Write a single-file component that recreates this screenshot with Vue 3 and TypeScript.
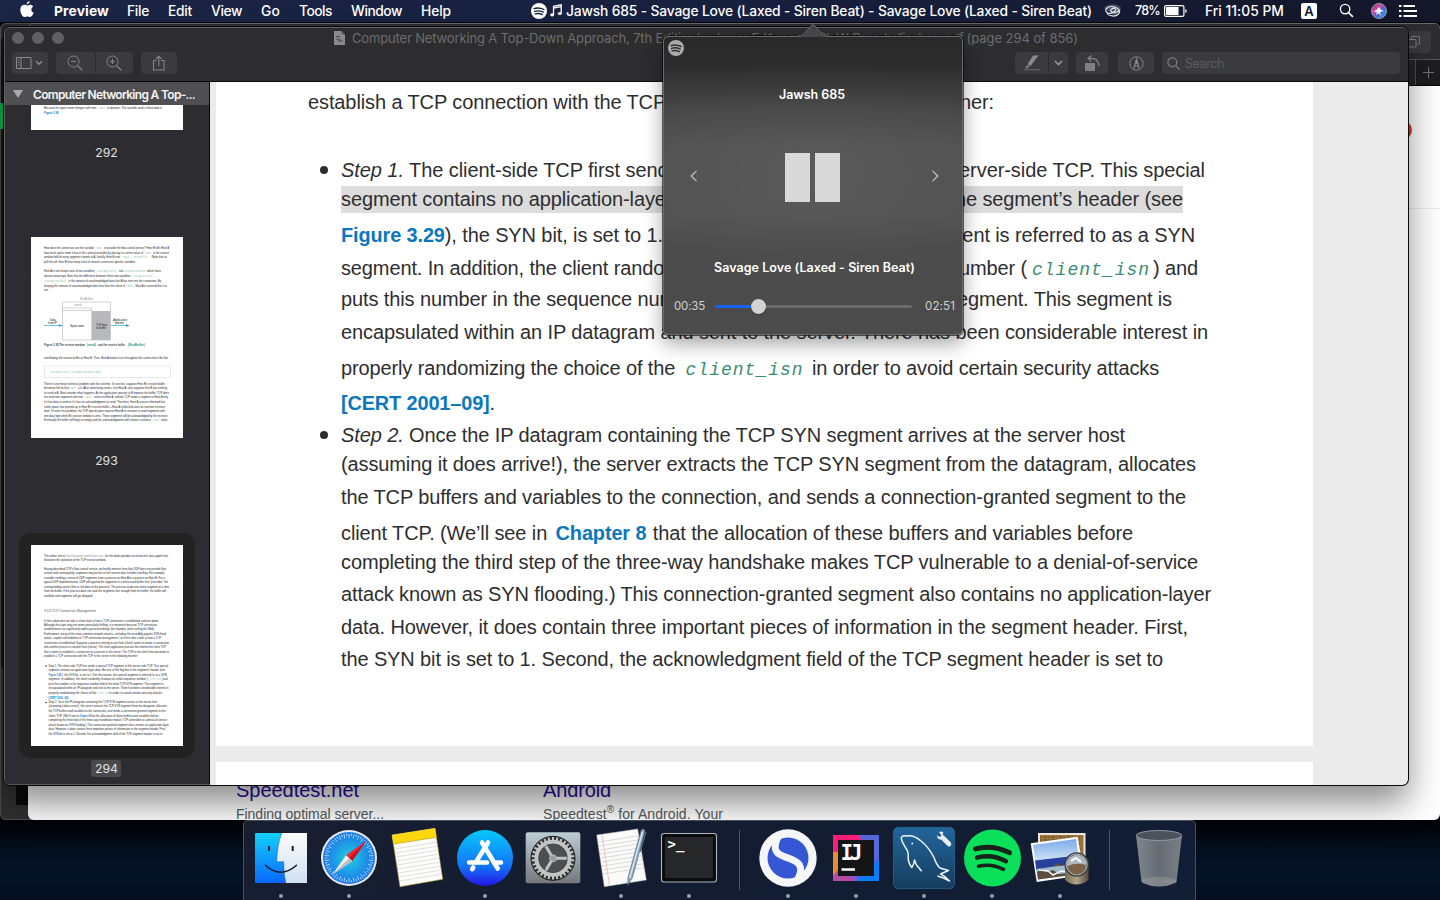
<script setup lang="ts">
import type { Directive } from 'vue'

/* Tracks a run of text out or in so that it fills the given width. */
const vFit: Directive<HTMLElement, number> = {
  mounted(el, binding) {
    const count = (el.textContent ?? '').length
    if (count === 0) return
    let spacing = 0
    for (let pass = 0; pass < 4; pass++) {
      spacing += (binding.value - el.getBoundingClientRect().width) / count
      el.style.letterSpacing = `${spacing}px`
    }
  },
}

interface Run { t: string; k?: 'i' | 'link' | 'code' }
interface Line { w: number; gap: number; runs: Run[]; bullet?: boolean; mark?: boolean }
interface Tiny { y: number; w: number; t: string; x?: number; k?: string }

const menus = [
  { t: 'File', w: 22 }, { t: 'Edit', w: 24 }, { t: 'View', w: 31 }, { t: 'Go', w: 19 },
  { t: 'Tools', w: 33 }, { t: 'Window', w: 51 }, { t: 'Help', w: 30 },
]

const lines: Line[] = [
  { w: 864, gap: 44, bullet: true, runs: [{ t: 'Step 1.', k: 'i' }, { t: ' The client-side TCP first sends a special TCP segment to the server-side TCP. This special' }] },
  { w: 842, gap: 5, mark: true, runs: [{ t: 'segment contains no application-layer data. But one of the flag bits in the segment’s header (see' }] },
  { w: 854, gap: 12, runs: [{ t: 'Figure 3.29', k: 'link' }, { t: '), the SYN bit, is set to 1. For this reason, this special segment is referred to as a SYN' }] },
  { w: 857, gap: 9, runs: [{ t: 'segment. In addition, the client randomly chooses an initial sequence number (' }, { t: 'client_isn', k: 'code' }, { t: ') and' }] },
  { w: 831, gap: 7, runs: [{ t: 'puts this number in the sequence number field of the initial TCP SYN segment. This segment is' }] },
  { w: 867, gap: 9, runs: [{ t: 'encapsulated within an IP datagram and sent to the server. There has been considerable interest in' }] },
  { w: 818, gap: 12, runs: [{ t: 'properly randomizing the choice of the ' }, { t: 'client_isn', k: 'code' }, { t: ' in order to avoid certain security attacks' }] },
  { w: 154, gap: 11, runs: [{ t: '[CERT 2001–09]', k: 'link' }, { t: '.' }] },
  { w: 784, gap: 8, bullet: true, runs: [{ t: 'Step 2.', k: 'i' }, { t: ' Once the IP datagram containing the TCP SYN segment arrives at the server host' }] },
  { w: 855, gap: 5, runs: [{ t: '(assuming it does arrive!), the server extracts the TCP SYN segment from the datagram, allocates' }] },
  { w: 845, gap: 9, runs: [{ t: 'the TCP buffers and variables to the connection, and sends a connection-granted segment to the' }] },
  { w: 792, gap: 12, runs: [{ t: 'client TCP. (We’ll see in ' }, { t: 'Chapter 8', k: 'link' }, { t: ' that the allocation of these buffers and variables before' }] },
  { w: 857, gap: 5, runs: [{ t: 'completing the third step of the three-way handshake makes TCP vulnerable to a denial-of-service' }] },
  { w: 870, gap: 8, runs: [{ t: 'attack known as SYN flooding.) This connection-granted segment also contains no application-layer' }] },
  { w: 847, gap: 9, runs: [{ t: 'data. However, it does contain three important pieces of information in the segment header. First,' }] },
  { w: 822, gap: 8, runs: [{ t: 'the SYN bit is set to 1. Second, the acknowledgment field of the TCP segment header is set to' }] },
]

const page292: Tiny[] = [
  { y: 3, w: 53, t: 'Because the spare room changes with time,' },
  { y: 3, x: 68, w: 6, t: 'rwnd', k: 'code' },
  { y: 3, x: 76, w: 55, t: 'is dynamic. The variable rwnd is illustrated in' },
  { y: 8, w: 15, t: 'Figure 3.38.', k: 'link' },
]

const page293: Tiny[] = [
  { y: 12, w: 50, t: 'How does the connection use the variable' }, { y: 12, x: 65, w: 6, t: 'rwnd', k: 'code' }, { y: 12, x: 73, w: 65, t: 'to provide the flow-control service? Host B tells Host A' },
  { y: 16.7, w: 99, t: 'how much spare room it has in the connection buffer by placing its current value of' }, { y: 16.7, x: 114, w: 6, t: 'rwnd', k: 'code' }, { y: 16.7, x: 122, w: 16, t: 'in the receive' },
  { y: 21.3, w: 76, t: 'window field of every segment it sends to A. Initially, Host B sets' }, { y: 21.3, x: 92, w: 25, t: 'rwnd = RcvBuffer', k: 'code' }, { y: 21.3, x: 119, w: 17, t: '. Note that to' },
  { y: 26, w: 92, t: 'pull this off, Host B must keep track of several connection-specific variables.' },
  { y: 35.3, w: 51, t: 'Host A in turn keeps track of two variables,' }, { y: 35.3, x: 66, w: 20, t: 'LastByteSent', k: 'code' }, { y: 35.3, x: 88, w: 4, t: 'and' }, { y: 35.3, x: 93, w: 22, t: 'LastByteAcked', k: 'code' }, { y: 35.3, x: 116, w: 14, t: 'which have' },
  { y: 40, w: 87, t: 'obvious meanings. Note that the difference between these two variables,' }, { y: 40, x: 102, w: 23, t: 'LastByteSent –', k: 'code' },
  { y: 45, w: 22, t: 'LastByteAcked', k: 'code' }, { y: 45, x: 36, w: 94, t: ', is the amount of unacknowledged data that A has sent into the connection. By' },
  { y: 49.7, w: 81, t: 'keeping the amount of unacknowledged data less than the value of' }, { y: 49.7, x: 95, w: 7, t: 'rwnd', k: 'code' }, { y: 49.7, x: 103, w: 33, t: ', Host A is assured that it is' },
  { y: 54.3, w: 4, t: 'not' },
  { y: 109.3, w: 41, t: 'Figure 3.38 The receive window', k: 'b' }, { y: 109.3, x: 56, w: 9, t: '(rwnd)', k: 'bcode' }, { y: 109.3, x: 67, w: 27, t: 'and the receive buffer', k: 'b' }, { y: 109.3, x: 97, w: 17, t: '(RcvBuffer)', k: 'bcode' },
  { y: 122, w: 124, t: 'overflowing the receive buffer at Host B. Thus, Host A makes sure throughout the connection’s life that' },
  { y: 135.6, x: 19, w: 51, t: 'LastByteSent–LastByteAcked≤rwnd', k: 'code' },
  { y: 147.5, w: 121, t: 'There is one minor technical problem with this scheme. To see this, suppose Host B’s receive buffer' },
  { y: 152.2, w: 25, t: 'becomes full so that' }, { y: 152.2, x: 39, w: 6, t: 'rwnd', k: 'code' }, { y: 152.2, x: 47, w: 89, t: '= 0. After advertising rwnd = 0 to Host A, also suppose that B has nothing' },
  { y: 156.7, w: 125, t: 'to send to A. Now consider what happens. As the application process at B empties the buffer, TCP does' },
  { y: 161.3, w: 39, t: 'not send new segments with new' }, { y: 161.3, x: 54, w: 7, t: 'rwnd', k: 'code' }, { y: 161.3, x: 63, w: 74, t: 'values to Host A; indeed, TCP sends a segment to Host A only' },
  { y: 166, w: 121, t: 'if it has data to send or if it has an acknowledgment to send. Therefore, Host A is never informed that' },
  { y: 170.6, w: 121, t: 'some space has opened up in Host B’s receive buffer—Host A is blocked and can transmit no more' },
  { y: 175, w: 121, t: 'data! To solve this problem, the TCP specification requires Host A to continue to send segments with' },
  { y: 179.6, w: 124, t: 'one data byte when B’s receive window is zero. These segments will be acknowledged by the receiver.' },
  { y: 184.3, w: 107, t: 'Eventually the buffer will begin to empty and the acknowledgments will contain a nonzero' }, { y: 184.3, x: 122, w: 6, t: 'rwnd', k: 'code' }, { y: 184.3, x: 130, w: 7, t: 'value.' },
]

const page294: Tiny[] = [
  { y: 11.8, w: 21, t: 'The online site at' }, { y: 11.8, x: 35, w: 37, t: 'http://www.awl.com/kurose-ross', k: 'pale' }, { y: 11.8, x: 74, w: 63, t: 'for this book provides an interactive Java applet that' },
  { y: 16, w: 62, t: 'illustrates the operation of the TCP receive window.' },
  { y: 24.8, w: 122, t: 'Having described TCP’s flow-control service, we briefly mention here that UDP does not provide flow' },
  { y: 29.4, w: 121, t: 'control and consequently, segments may be lost at the receiver due to buffer overflow. For example,' },
  { y: 33.8, w: 121, t: 'consider sending a series of UDP segments from a process on Host A to a process on Host B. For a' },
  { y: 38.4, w: 124, t: 'typical UDP implementation, UDP will append the segments in a finite-sized buffer that “precedes” the' },
  { y: 42.8, w: 125, t: 'corresponding socket (that is, the door to the process). The process reads one entire segment at a time' },
  { y: 47.3, w: 122, t: 'from the buffer. If the process does not read the segments fast enough from the buffer, the buffer will' },
  { y: 51.7, w: 49, t: 'overflow and segments will get dropped.' },
  { y: 66.6, w: 52, t: '3.5.6 TCP Connection Management', k: 'head' },
  { y: 76.5, w: 115, t: 'In this subsection we take a closer look at how a TCP connection is established and torn down.' },
  { y: 81, w: 113, t: 'Although this topic may not seem particularly thrilling, it is important because TCP connection' },
  { y: 85.4, w: 111, t: 'establishment can significantly add to perceived delays (for example, when surfing the Web).' },
  { y: 89.8, w: 122, t: 'Furthermore, many of the most common network attacks—including the incredibly popular SYN flood' },
  { y: 94.4, w: 117, t: 'attack—exploit vulnerabilities in TCP connection management. Let’s first take a look at how a TCP' },
  { y: 99, w: 125, t: 'connection is established. Suppose a process running in one host (client) wants to initiate a connection' },
  { y: 103.4, w: 122, t: 'with another process in another host (server). The client application process first informs the client TCP' },
  { y: 107.8, w: 125, t: 'that it wants to establish a connection to a process in the server. The TCP in the client then proceeds to' },
  { y: 112.4, w: 94, t: 'establish a TCP connection with the TCP in the server in the following manner:' },
]
const stepRows = [121.7, 126, 130.7, 135.4, 139.7, 144.4, 149, 153.7, 158, 162.4, 167, 171.7, 176, 180.7, 185, 189.7]
lines.forEach((line, i) => {
  const scale = 0.1386
  const chars = line.runs.reduce((n, r) => n + r.t.length, 0)
  let x = 17.6
  for (const run of line.runs) {
    const w = (run.t.length / chars) * line.w * scale
    page294.push({ y: stepRows[i], x, w: w - 0.3, t: run.t.trim(), k: run.k === 'i' ? undefined : run.k })
    x += w + 0.2
  }
})

const ticks = Array.from({ length: 60 }, (_, i) => i * 6)
const teeth = Array.from({ length: 30 }, (_, i) => i * 12)
const noteRows = [27, 31, 35, 39, 43, 47, 51, 55, 59]
</script>

<template>
  <div class="desktop">
    <header class="menubar">
      <svg class="apple" viewBox="0 0 14 17"><path d="M9.6 0c.1 1.500-1.200 3.300-2.900 3.400C6.500 1.900 8 .2 9.600 0zM7.200 4.500c.7 0 1.600-.8 2.900-.8 1.200 0 2.400.6 3.100 1.700-2.700 1.600-2.200 5.300.5 6.400-.6 1.700-2 4.300-3.600 4.300-1 0-1.500-.6-2.700-.6s-1.700.6-2.700.6C2.600 16.100.3 12 .3 8.700c0-3.200 2-4.900 4-4.900 1.300 0 2.100.7 2.900.7z" fill="#fff" /></svg>
      <b v-fit="55" class="app">Preview</b>
      <nav class="menus"><span v-for="m in menus" :key="m.t" v-fit="m.w">{{ m.t }}</span></nav>
      <svg class="spot" viewBox="0 0 16 16"><circle cx="8" cy="8" r="8" fill="#fff" /><path d="M3 5.600q5-1.600 10 .9M3.500 8.300q4.500-1.300 8.700.8M4 10.900q4-1.100 7.300.7" fill="none" stroke="#1a2240" stroke-width="1.300" stroke-linecap="round" /></svg>
      <svg class="note" viewBox="0 0 12 13"><path d="M3.500 10.500V2.300L11.200.8v8.400M3.500 4.200 11.200 2.700" fill="none" stroke="#fff" stroke-width="1.300" /><ellipse cx="2.200" cy="10.800" rx="2" ry="1.600" fill="#fff" /><ellipse cx="9.800" cy="9.500" rx="2" ry="1.600" fill="#fff" /></svg>
      <span v-fit="526" class="song">Jawsh 685 - Savage Love (Laxed - Siren Beat) - Savage Love (Laxed - Siren Beat)</span>
      <svg class="cc" viewBox="0 0 20 16"><path d="M1 5C4 1 14-1 18 5l-1 4-5 4z" fill="#6c7183" opacity=".6" /><path d="M15.500 6.500C13 3 6 2.500 3.500 5.500S5.500 11.500 9 10s5-4 2.500-4.500-5 1.500-3 3.300 6 .4 7.800-1.300M4 10.500c2 2.600 8 3.600 11 1 2.600-2.200 1.800-5-.5-6" fill="none" stroke="#e4e6ec" stroke-width="1.200" /></svg>
      <span v-fit="25" class="pct">78%</span>
      <svg class="batt" viewBox="0 0 24 12"><rect x=".6" y=".6" width="19.300" height="10.800" rx="1.500" fill="none" stroke="#fff" stroke-width="1.200" /><rect x="2" y="2" width="12.500" height="8" fill="#fff" /><path d="M21.300 4v4q1.500-.5 1.500-2t-1.500-2z" fill="#fff" /></svg>
      <span v-fit="79" class="clock">Fri 11:05 PM</span>
      <span class="input">A</span>
      <svg class="lens" viewBox="0 0 16 16"><circle cx="6.500" cy="6.500" r="5" fill="none" stroke="#fff" stroke-width="1.500" /><path d="m10.200 10.200 4.600 4.600" stroke="#fff" stroke-width="1.700" /></svg>
      <svg class="siri" viewBox="0 0 16 16">
        <defs><linearGradient id="siri" x1="0" y1="0" x2="1" y2="1"><stop offset="0" stop-color="#60405f" /><stop offset=".35" stop-color="#d8459c" /><stop offset=".6" stop-color="#4c67d8" /><stop offset="1" stop-color="#1fc5c9" /></linearGradient></defs>
        <circle cx="8" cy="8" r="7.500" fill="url(#siri)" stroke="#a7a9bb" stroke-width=".9" /><path d="M2.500 8.500q3.500-1 5.500-4.500 1.500 3.500 5.500 4-3 .5-4.500 1.300l1.500 4-2.700-3-2.800 2 1-3z" fill="#eafcff" />
      </svg>
      <svg class="list" viewBox="0 0 18 12"><path d="M0 1h2.500M0 6h2.500M0 11h2.500M4.500 1H16M4.500 6H18M4.500 11H18" stroke="#fff" stroke-width="1.900" /></svg>
    </header>

    <section class="win chat"><div class="chat-green" /><div class="chat-dark" /></section>

    <section class="win browser">
      <div class="b-tools"><span class="b-btn"><svg viewBox="0 0 14 14"><path d="M4.500 4V1.500h8v7.500H10M1 4.500h8v7.500H1" fill="none" stroke="#77777a" /></svg></span></div>
      <div class="b-tabs"><span class="b-plus" /></div>
      <div class="b-page">
        <div class="b-rule" />
        <div class="results">
          <div class="result"><a v-fit="123">Speedtest.net</a><p><span v-fit="148">Finding optimal server...</span></p></div>
          <div class="result"><a v-fit="68">Android</a><p><span v-fit="180">Speedtest<sup>®</sup> for Android. Your</span></p></div>
        </div>
      </div>
      <i class="avatar" />
    </section>

    <main class="win preview">
      <div class="chrome">
        <div class="titlebar">
          <i class="light" /><i class="light" /><i class="light" />
          <div class="title">
            <svg viewBox="0 0 11 14"><path d="M0 0h7.500L11 3.500V14H0z" fill="#8a8a8c" /><path d="M7.500 0v3.500H11" fill="#5b5b5e" /><path d="M2 8h4v3M2 5.500h4M4 10h5" stroke="#4a4a4c" fill="none" /></svg>
            <span v-fit="326">Computer Networking A Top-Down Approach, 7th Edit</span><span v-fit="285">ion by James F. Kurose, Keith W. Ross_bellingham.pdf</span><span v-fit="115"> (page 294 of 856)</span>
          </div>
        </div>
        <div class="tools">
          <span class="btn w36"><svg width="28" height="14" viewBox="0 0 28 14"><path d="M.5 1.500h14.500v11H.5zM5 1.500v11M2 4h1.500M2 6.500h1.500M2 9h1.500" fill="none" stroke="#8b8b8e" /><path d="m20 5.200 3 3 3-3" fill="none" stroke="#8b8b8e" stroke-width="1.500" /></svg></span>
          <span class="btn w39 gap8 left zoomer"><svg width="16" height="16" viewBox="0 0 16 16"><circle cx="6.500" cy="6.500" r="5.500" fill="none" stroke="#858588" /><path d="m10.500 10.500 5 5M4 6.500h5" stroke="#858588" stroke-width="1.200" /></svg></span>
          <span class="btn w37 gap1 right zoomer"><svg width="16" height="16" viewBox="0 0 16 16"><circle cx="6.500" cy="6.500" r="5.500" fill="none" stroke="#858588" /><path d="m10.500 10.500 5 5M4 6.500h5M6.500 4v5" stroke="#858588" stroke-width="1.200" /></svg></span>
          <span class="btn w36 gap8"><svg width="14" height="16" viewBox="0 0 14 16"><path d="M4.500 5.500h-3v9.500h10.500V5.500H9M6.800 11V1.500M4 4l2.800-2.800L9.600 4" fill="none" stroke="#858588" stroke-width="1.100" /></svg></span>
          <span class="btn w33 push left"><svg width="18" height="16" viewBox="0 0 18 16"><path d="M10 .5h5.500L7.500 11l-3-1.500z" fill="#8b8b8e" /><path d="m4 10.300 2.800 1.400L2 14z" fill="#8b8b8e" /><path d="M1 14.700h16" stroke="#606063" stroke-width="1.300" /></svg></span>
          <span class="btn w19 gap1 right"><svg width="9" height="6" viewBox="0 0 9 6"><path d="m1 1 3.500 3.500L8 1" fill="none" stroke="#98989b" stroke-width="1.600" /></svg></span>
          <span class="btn w32 gap8"><svg width="17" height="17" viewBox="0 0 17 17"><rect x="1" y="8" width="10" height="8" rx=".8" fill="#808083" /><path d="M5 3.500q9-1.500 10 7.500" fill="none" stroke="#808083" stroke-width="1.300" /><path d="M7.500.5 4 3.500l3.500 2.700" fill="none" stroke="#808083" stroke-width="1.300" /></svg></span>
          <span class="btn w36 gap10"><svg width="15" height="15" viewBox="0 0 15 15"><circle cx="7.500" cy="7.500" r="6.700" fill="none" stroke="#858588" /><path d="M4.800 12.500 7.500 3l2.700 9.500M5.700 10h3.600M7.500 3v5" fill="none" stroke="#858588" stroke-width="1.200" /></svg></span>
          <span class="search gap8"><svg width="13" height="13" viewBox="0 0 13 13"><circle cx="5.300" cy="5.300" r="4.500" fill="none" stroke="#858588" stroke-width="1.100" /><path d="m8.600 8.600 4 4" stroke="#858588" stroke-width="1.200" /></svg><span v-fit="39">Search</span></span>
        </div>
      </div>
      <div class="body">
        <aside class="side">
          <div class="side-head"><i /><b v-fit="162">Computer Networking A Top-...</b></div>
          <svg class="thumb short" viewBox="0 0 152 25"><text v-for="(l, i) in page292" :key="i" :x="l.x ?? 13" :y="l.y + 0.5" :textLength="l.w" lengthAdjust="spacingAndGlyphs" :class="l.k">{{ l.t }}</text></svg>
          <span class="num"><em>292</em></span>
          <svg class="thumb t293" viewBox="0 0 152 201">
            <g fill="none" stroke="#b4b6ba" stroke-width=".6"><path d="M31.500 65h48v38h-48zM31.500 71h29v32M31.500 73.500h29" /><rect x="13.500" y="129" width="126" height="11.500" stroke="#d5d7da" /></g>
            <path d="M61 74h18.500v29H61z" fill="#b8b9be" />
            <path d="M13 88.500h16M80 88.500h16" stroke="#48b6ea" stroke-width=".8" /><path d="m28 87.200 3.500 1.300-3.500 1.300zM95 87.200l3.500 1.300-3.500 1.300z" fill="#1c8fd2" />
            <text x="49" y="63" textLength="13" class="pale">RcvBuffer</text><text x="43" y="69" textLength="7" class="pale">rwnd</text>
            <text x="19" y="83.500" textLength="6">Data,</text><text x="17" y="86.700" textLength="9">from IP</text><text x="39" y="90" textLength="14">Spare room</text>
            <text x="65" y="88.500" textLength="11">TCP data</text><text x="65" y="92" textLength="10">in buffer</text><text x="82" y="83.500" textLength="14">Application</text><text x="84" y="86.700" textLength="9">process</text>
            <text v-for="(l, i) in page293" :key="i" :x="l.x ?? 13" :y="l.y" :textLength="l.w" lengthAdjust="spacingAndGlyphs" :class="l.k">{{ l.t }}</text>
          </svg>
          <span class="num"><em>293</em></span>
          <div class="picked">
            <svg class="thumb" viewBox="0 0 152 201">
              <circle cx="15" cy="121" r=".8" fill="#333" /><circle cx="15" cy="157.500" r=".8" fill="#333" />
              <text v-for="(l, i) in page294" :key="i" :x="l.x ?? 13" :y="l.y" :textLength="l.w" lengthAdjust="spacingAndGlyphs" :class="l.k">{{ l.t }}</text>
            </svg>
          </div>
          <span class="num on"><em>294</em></span>
        </aside>
        <article class="doc">
          <div class="page">
            <p class="lead"><span v-fit="686">establish a TCP connection with the TCP in the server in the following manner:</span></p>
            <p v-for="(l, i) in lines" :key="i" class="line" :class="{ bullet: l.bullet, mark: l.mark }" :style="{ marginTop: l.gap + 'px' }"><span v-fit="l.w"><span v-for="(r, j) in l.runs" :key="j" :class="r.k">{{ r.t }}</span></span></p>
          </div>
          <div class="page next" />
        </article>
      </div>
    </main>

    <section class="player">
      <svg class="tip" viewBox="0 0 30 13"><path d="M0 12.500q4 0 6-2.500L14 1.200q1-1 2 0L24 10q2 2.500 6 2.500V13H0z" fill="#454547" /><path d="M0 12.200q4 0 6-2.500L14 1q1-1 2 0l8 8.700q2 2.500 6 2.500" fill="none" stroke="#757577" stroke-width=".8" /></svg>
      <svg class="p-logo" viewBox="0 0 16 16"><circle cx="8" cy="8" r="8" fill="#aaa" /><path d="M3 5.600q5-1.600 10 .9M3.500 8.300q4.500-1.300 8.700.8M4 10.900q4-1.100 7.300.7" fill="none" stroke="#2d2d2d" stroke-width="1.400" stroke-linecap="round" /></svg>
      <div class="artist"><span v-fit="66">Jawsh 685</span></div>
      <div class="controls">
        <svg viewBox="0 0 8 12"><path d="M6.500.8 1.200 6l5.300 5.200" fill="none" stroke="#ccc" stroke-width="1.100" /></svg>
        <span class="pause"><i /><i /></span>
        <svg viewBox="0 0 8 12"><path d="M1.500.8 6.800 6l-5.300 5.200" fill="none" stroke="#ccc" stroke-width="1.100" /></svg>
      </div>
      <div class="track"><span v-fit="201">Savage Love (Laxed - Siren Beat)</span></div>
      <div class="seek"><span v-fit="31">00:35</span><div class="rail"><i class="done" /><i class="knob" /></div><span v-fit="30">02:51</span></div>
    </section>

    <footer class="dock">
      <div class="cell run"><svg viewBox="0 0 68 78">
        <defs><linearGradient id="fb" x2="0" y2="1"><stop stop-color="#13d0fe" /><stop offset="1" stop-color="#0a68fb" /></linearGradient><linearGradient id="fw" x2="0" y2="1"><stop stop-color="#fbfbfc" /><stop offset="1" stop-color="#cfe0f0" /></linearGradient></defs>
        <rect x="8" y="11" width="52" height="50" rx="1" fill="url(#fb)" /><path d="M34.700 11Q30 24 29.700 39.700h7Q36.700 51 38.700 61H60V11z" fill="url(#fw)" />
        <path d="M34.700 11Q30 24 29.700 39.700h7Q36.700 51 38.700 61" fill="none" stroke="#2a5a8a" stroke-width=".5" /><path d="M22 24v5M45.700 24v5" stroke="#14202e" stroke-width="2" /><path d="M18.500 43.200q15 14 31 0" fill="none" stroke="#0b1a2c" stroke-width="1.500" stroke-linecap="round" />
      </svg></div>
      <div class="cell run"><svg viewBox="0 0 68 78">
        <defs><radialGradient id="sa"><stop stop-color="#1fd0e0" /><stop offset="1" stop-color="#1d74ea" /></radialGradient></defs>
        <circle cx="34" cy="36" r="28" fill="#e9ebee" /><circle cx="34" cy="36" r="26" fill="url(#sa)" />
        <path v-for="a in ticks" :key="a" :d="a % 12 ? 'M34 11.500v2.500' : 'M34 11.500v4.500'" :transform="`rotate(${a} 34 36)`" stroke="#d8f2ff" stroke-width=".7" />
        <path d="M51 19.300 31 33.200l6.200 5.800z" fill="#f8232e" /><path d="M51 19.300 34.200 36l3 3z" fill="#c8141f" /><path d="M17.500 52.500 31 33.200l6.200 5.800z" fill="#f3f3f3" /><path d="M17.500 52.500 34.200 36l3 3z" fill="#b9bcc2" />
      </svg></div>
      <div class="cell"><svg viewBox="0 0 68 78">
        <path d="M9 13 52 6.300l7.700 51L17 64.700z" fill="#fdfdfb" stroke="#b9a13a" stroke-width=".6" /><path d="M9 13 52 6.300l1.500 9L10.500 22z" fill="#fdd70f" /><path d="m10.500 22 43-6.700" stroke="#c39b10" stroke-width=".7" />
        <path v-for="y in noteRows" :key="y" :d="`M${11 + (y - 22) * .15} ${y}l42-6.800`" stroke="#c9c9c7" stroke-width=".6" />
      </svg></div>
      <div class="cell run"><svg viewBox="0 0 68 78">
        <defs><linearGradient id="as" x2="0" y2="1"><stop stop-color="#08c8fb" /><stop offset=".65" stop-color="#1273f8" /><stop offset="1" stop-color="#2414e6" /></linearGradient></defs>
        <circle cx="34" cy="36" r="28" fill="url(#as)" /><g stroke="#fff" stroke-width="4.600" stroke-linecap="round" fill="none"><path d="m37 20.500-12.300 20M22.200 45.500l-1 1.700M31 20.500l15.700 26M18 40.500h18M44 40.500h6" /></g>
      </svg></div>
      <div class="cell"><svg viewBox="0 0 68 78">
        <defs><linearGradient id="sp" x2="0" y2="1"><stop stop-color="#bccdd4" /><stop offset="1" stop-color="#75787a" /></linearGradient></defs>
        <rect x="6.700" y="10.200" width="54.600" height="51" rx="2" fill="url(#sp)" /><circle cx="34" cy="36.300" r="22" fill="#303132" stroke="#222" /><circle cx="34" cy="36.300" r="16.500" fill="#4c4e50" stroke="#c2c4c4" stroke-width="4" />
        <path v-for="a in teeth" :key="a" d="M34 15v4" :transform="`rotate(${a} 34 36.300)`" stroke="#c4c6c6" stroke-width="2" />
        <path d="M34 36.300h15.500M34 36.300l-8-13.500M34 36.300l-8 13.500" stroke="#bfc1c1" stroke-width="3" /><circle cx="34" cy="36.300" r="3.500" fill="#989b9c" stroke="#ccc" stroke-width=".7" /><circle cx="34" cy="36.300" r="14.300" fill="none" stroke="#3a3a3a" stroke-width=".6" />
      </svg></div>
      <div class="cell run"><svg viewBox="0 0 68 78">
        <path d="M9.700 13 50.700 7l8.600 51-42 6.700z" fill="#fbfbfa" stroke="#bbb" stroke-width=".5" /><path v-for="y in noteRows" :key="y" :d="`M${10 + (y - 18) * .15} ${y - 7}l41-6.300`" stroke="#bfc1c4" stroke-width=".6" /><path d="m15 12.500 7.500 51.300" stroke="#f3a9ac" stroke-width=".7" />
        <path d="M54 8.500q2.500-3 4 .5L45.500 55.500l-4.800 8 .3-8z" fill="#8ea8c0" stroke="#4e5f70" stroke-width=".6" /><path d="M55.500 10 42.800 56" stroke="#dfeaf5" stroke-width="1.300" /><path d="m59 10-6 20" stroke="#54677a" stroke-width="1.200" />
      </svg></div>
      <div class="cell run"><svg viewBox="0 0 68 78">
        <rect x="6.500" y="11.500" width="55" height="48.500" rx="2.500" fill="#0b0b0c" stroke="#a9b6bd" stroke-width="1.100" /><rect x="10" y="15" width="48" height="41" fill="#262728" /><text x="12.500" y="26.500" class="term">&gt;_</text>
      </svg></div>
      <div class="sep" />
      <div class="cell run"><svg viewBox="0 0 68 78">
        <circle cx="34" cy="36" r="28.700" fill="#f5f6f7" /><circle cx="34" cy="36" r="20.500" fill="#3657d3" /><path d="M24.500 14C15 32 28 33.500 34 36s19 5 9 23" fill="none" stroke="#f5f6f7" stroke-width="7" />
      </svg></div>
      <div class="cell run"><svg viewBox="0 0 68 78">
        <path d="M11 13h46v46H11z" fill="#7b5bd0" /><path d="M11 13h26l8 12-34 7z" fill="#fc1d76" /><path d="M37 13h20v28l-8-2z" fill="#5667dc" /><path d="M11 30h8l-3 19-5 5z" fill="#e88b32" /><path d="M11 54l6-8 17 13H11z" fill="#b44ba4" /><path d="M34 59l8-10 15-12v22z" fill="#087cf9" />
        <path d="M16 18h36v36H16z" fill="#151515" /><text x="18.500" y="38" class="ij" textLength="22">IJ</text><path d="M19.500 47.500H33" stroke="#fff" stroke-width="2.500" />
      </svg></div>
      <div class="cell run"><svg viewBox="0 0 68 78">
        <defs><linearGradient id="my" x2="0" y2="1"><stop stop-color="#22659b" /><stop offset="1" stop-color="#153d5e" /></linearGradient></defs>
        <rect x="3.400" y="5.400" width="61.200" height="61.200" rx="5" fill="url(#my)" stroke="#2f6f9f" stroke-width=".7" />
        <path d="M31.700 49.300 26.500 43l-2-5q-.5 4.500-2.700 7.500-4.500-5-3.500-13.300-.5-4-3.300-7.500-4-6.500-3.700-9 1-2.500 5-1.800Q24 12.500 31 19q8 6.500 13 16.500 2.500 7.500 6 10.500l8.500 2.500-8 3.500q4.500 2 9 7-6-3.500-12-5" fill="none" stroke="#eef6fb" stroke-width="1.500" stroke-linejoin="round" /><circle cx="22.300" cy="21.500" r=".9" fill="#fff" />
        <path d="m53 16 6 6" stroke="#e3eef6" stroke-width="4.600" stroke-linecap="round" /><path d="M53.500 10.500q-1.500 1.500.5 4l-3 3.200q-4-.2-4-4.200l3 1.500 1.500-1.800-2.500-3q2.500-1.500 4.500.3z" fill="#e3eef6" />
      </svg></div>
      <div class="cell run"><svg viewBox="0 0 68 78">
        <circle cx="34.500" cy="36" r="28.500" fill="#0be05b" /><g fill="none" stroke="#17231b" stroke-linecap="round"><path d="M17.500 26.800q17-4.700 34 4" stroke-width="5" /><path d="M19 35.700q15-4 29 3.600" stroke-width="4.400" /><path d="M20.500 44.300q12.500-3.200 25 3" stroke-width="3.600" /></g>
      </svg></div>
      <div class="cell run"><svg viewBox="0 0 68 78">
        <defs><linearGradient id="sky" x2="0" y2="1"><stop stop-color="#7aa9e8" /><stop offset="1" stop-color="#d4e6f6" /></linearGradient><linearGradient id="lp"><stop stop-color="#77695a" /><stop offset=".5" stop-color="#b5a38b" /><stop offset="1" stop-color="#54483b" /></linearGradient></defs>
        <path d="M12 11h47.500v42H12z" fill="#ece7dc" /><path d="M14 13h43.500v38H14z" fill="#9b7640" /><path d="M14 15h43M14 18h43M14 22h43M14 27h43M14 32h43" stroke="#5e4420" stroke-width="1.200" stroke-dasharray="1.500 2 3 1.300" />
        <path d="m4.700 21.300 47-6.600L58 53l-47.300 7z" fill="#fcfcfc" /><path d="m7 23 43-6 2.500 17L9.500 40z" fill="url(#sky)" /><path d="m9 38.500 43-5 1.500 9-43 6.500z" fill="#27409c" /><path d="m10.200 47 43.300-6 2 10-43.500 6.500z" fill="#9fb9ce" /><path d="m11 50 5-3 5 3 6-2 6 4 10-1 3 2-34 4.500zM27 44l5-3 6 3z" fill="#5d4e3e" /><path d="m13 48 9 1 5 4 8-4 7 1" stroke="#f4f8fb" fill="none" stroke-width="1.500" />
        <path d="M39 45v13q11 9 23.500 0V43z" fill="url(#lp)" /><circle cx="50.700" cy="42.500" r="11" fill="#aeb9c0" stroke="#3d3f42" stroke-width="2.500" /><circle cx="50.700" cy="42.500" r="10.500" fill="none" stroke="#c7c7c4" stroke-width=".9" /><path d="M41.500 44q9-4 18.500-1-1 9-9.500 9.500-7-.5-9-8.500z" fill="#7b6348" /><path d="m45 39 5-3 5 4" stroke="#fff" fill="none" stroke-width="2" />
      </svg></div>
      <div class="sep last" />
      <div class="cell"><svg viewBox="0 0 68 78">
        <defs><linearGradient id="bin"><stop offset="0" stop-color="#7f858b" /><stop offset=".5" stop-color="#666c74" /><stop offset="1" stop-color="#7b8086" /></linearGradient></defs>
        <path d="M11 13q23 8 46 0l-5.500 47Q34 69 16.500 60z" fill="url(#bin)" /><ellipse cx="34" cy="13.500" rx="22.700" ry="5" fill="#4b525c" stroke="#9a9fa5" stroke-width=".9" /><path d="M16.500 58q17.500-7 35 0l-.5 3q-17 7-34 0z" fill="#a2a7ab" opacity=".4" />
      </svg></div>
    </footer>
  </div>
</template>

<style>
html, body { margin: 0; background: #030a16; }
</style>

<style scoped>
.desktop { position: relative; width: 1440px; height: 900px; overflow: hidden; font-family: Inter, "Liberation Sans", sans-serif; background: linear-gradient(#000205 0, #000205 820px, #041021 855px, #051327 875px, #030d1d 900px); }
.desktop span, .desktop b { white-space: pre; }
svg { display: block; flex: none; }
.menubar { height: 23px; display: flex; align-items: center; box-sizing: border-box; padding: 0 0 1px 20px; color: #fff; font-size: 13.800px; font-weight: 500; line-height: 22px; background: linear-gradient(90deg, #1b2546, #182040 50%, #131728); border-bottom: 1px solid #07080c; }
.menubar > * { flex: none; }
.apple { width: 14px; height: 17px; margin-top: -2px; }
.app { margin-left: 20px; font-weight: 700; }
.menus { display: flex; gap: 19px; margin-left: 18px; width: 404px; }
.spot { width: 16px; height: 16px; }
.note { width: 12px; height: 13px; margin-left: 3px; }
.song { margin-left: 4px; }
.cc { width: 20px; height: 16px; margin-left: 11px; }
.pct { margin-left: 12px; font-size: 12.500px; }
.batt { width: 24px; height: 12px; margin-left: 4px; }
.clock { margin-left: 17px; }
.input { width: 16px; height: 16px; margin-left: 17px; border-radius: 2px; background: #fff; color: #151a2e; line-height: 16px; text-align: center; font-weight: 600; font-size: 13px; }
.lens { width: 15px; height: 15px; margin-left: 22px; }
.siri { width: 16px; height: 16px; margin-left: 17px; }
.list { width: 18px; height: 12px; margin-left: 12px; }

.win { position: absolute; box-sizing: border-box; overflow: hidden; }
.chat { left: 0; top: 23px; width: 300px; height: 797px; border-radius: 6px; box-shadow: inset 0 0 0 1px #4e4e50; background: linear-gradient(#2b2b2d 0, #2b2b2d 15px, #151516 15px, #151516 645px, #303031 645px); display: flow-root; }
.chat-green { width: 3px; height: 26px; margin-top: 80px; background: #06b94c; }
.chat-dark { width: 20px; height: 20px; margin: 656px 0 0 16px; background: #0b0b0b; }
.browser { left: 28px; top: 23px; width: 1412px; height: 797px; border-radius: 6px; background: #fff; }
.b-tools { height: 37px; box-sizing: border-box; background: #2d2d30; border-top: 1px solid #6a6a6c; border-bottom: 1px solid #545456; padding: 7px 9px 0 0; display: flex; justify-content: flex-end; }
.b-btn { width: 60px; height: 22px; border-radius: 4px; background: #3b3b3e; display: flex; align-items: center; justify-content: flex-end; }
.b-btn svg { width: 14px; height: 14px; margin-right: 10px; }
.b-tabs { height: 26px; box-sizing: border-box; background: #252527; border-bottom: 1px solid #050505; display: flex; justify-content: flex-end; }
.b-plus { width: 24px; border-left: 1px solid #505052; background: linear-gradient(#737375, #737375) 50% / 11px 1px no-repeat, linear-gradient(#737375, #737375) 50% / 1px 11px no-repeat, #1d1d1f; }
.b-rule { height: 122px; border-bottom: 1px solid #ebebeb; }
.results { display: flex; margin: 569px 0 0 208px; }
.result { width: 307px; font-family: "Liberation Sans", sans-serif; color: #545a60; }
.result a { display: inline-block; color: #2a0a9c; font-size: 20px; line-height: 24px; white-space: pre; }
.result p { margin: 2px 0 0; font-size: 14px; line-height: 20px; height: 20px; }
.result p span { display: inline-block; }
.result sup { font-size: 10px; line-height: 0; }
.avatar { position: absolute; left: 1364px; top: 97px; width: 20px; height: 20px; border-radius: 50%; background: #e23d08; }

.preview { left: 4px; top: 27px; width: 1404px; height: 758px; border-radius: 6px; background: #2d2d30; border: 1px solid #5e5e60; border-right: 0; border-bottom: 0; box-shadow: 0 0 0 1px #0a0a0b, 0 18px 34px rgba(0, 0, 0, .46); display: flex; flex-direction: column; }
.chrome { height: 54px; box-sizing: border-box; border-bottom: 1px solid #0a0a0a; background: #2d2d30; flex: none; }
.titlebar { height: 20px; display: flex; align-items: center; padding-left: 7px; }
.light { width: 12px; height: 12px; border-radius: 50%; background: #606062; margin-right: 8px; }
.title { display: flex; align-items: center; margin-left: 262px; color: #6c6c6f; font-size: 13px; line-height: 18px; }
.title svg { width: 11px; height: 14px; margin-right: 7px; }
.tools { display: flex; height: 22px; margin-top: 4px; padding: 0 8px 0 7px; }
.btn { height: 22px; box-sizing: border-box; border-radius: 4px; background: #3b3b3e; display: flex; align-items: center; justify-content: center; }
.zoomer { padding-right: 2px; }
.left { border-radius: 4px 0 0 4px; } .right { border-radius: 0 4px 4px 0; }
.w36 { width: 36px; } .w39 { width: 39px; } .w37 { width: 37px; } .w33 { width: 33px; } .w19 { width: 19px; } .w32 { width: 32px; }
.gap8 { margin-left: 8px; } .gap1 { margin-left: 1px; } .gap10 { margin-left: 10px; } .push { margin-left: auto; }
.search { width: 238px; height: 22px; box-sizing: border-box; padding-left: 5px; border-radius: 4px; background: #3b3b3e; color: #5c5c5f; font-size: 12.500px; display: flex; align-items: center; gap: 5px; }
.body { flex: 1; display: flex; min-height: 0; }
.side { width: 204px; flex: none; border-right: 1px solid #050505; border-bottom: 1px solid #58585a; box-sizing: content-box; display: flex; flex-direction: column; align-items: center; background: #2d2d31; }
.side-head { width: 204px; height: 23px; flex: none; background: #505053; display: flex; align-items: center; color: #f4f4f4; font-size: 12px; }
.side-head i { border: 5px solid transparent; border-top: 8px solid #aaaaac; border-bottom: 0; margin: 0 10px 0 8px; }
.side-head b { font-weight: 600; padding-top: 1px; }
.thumb { width: 152px; height: 201px; background: #fff; flex: none; }
.thumb.short { height: 25px; }
.thumb text { font-family: "Liberation Sans", sans-serif; font-size: 2.900px; fill: #222224; }
.thumb .code { font-family: "Liberation Mono", monospace; fill: #3a9474; font-style: italic; }
.thumb .bcode { font-weight: 700; fill: #2e936f; }
.thumb .b { font-weight: 700; fill: #444; }
.thumb .link { font-weight: 700; fill: #0b78c6; }
.thumb .pale { fill: #8c8c8c; }
.thumb .head { font-size: 3.200px; fill: #555; }
.num { display: flex; height: 18px; margin: 14px 2px 0 0; font-size: 12.300px; line-height: 18px; color: #e2e2e4; flex: none; }
.num em { font-style: normal; padding: 0 3px 0 4px; border-radius: 3px; }
.t293 { margin-top: 75px; }
.num + .picked { margin-top: 63px; }
.picked { width: 176px; height: 225px; box-sizing: border-box; padding: 12px; border-radius: 12px; background: #222223; flex: none; }
.num.on { margin-top: 2px; }
.num.on em { background: #4a4a4d; height: 17px; line-height: 17px; }
.doc { flex: 1; background: #ebebeb; padding-left: 6px; overflow: hidden; color: #2e2e30; font-family: "Liberation Sans", Arial, sans-serif; font-size: 20px; line-height: 24px; }
.page { width: 1097px; height: 664px; box-sizing: border-box; padding: 8px 0 0 92px; background: #fff; }
.page.next { margin-top: 16px; }
.lead, .line { margin: 0; height: 24px; display: flex; }
.line { padding-left: 33px; position: relative; }
.bullet::before { content: ""; position: absolute; left: 12px; top: 8px; width: 8px; height: 8px; border-radius: 50%; background: #2e2e30; }
.mark > span { background: #dcdcdc; box-shadow: 0 -1px #dcdcdc, 0 2px #dcdcdc; }
.i { font-style: italic; }
.link { font-weight: 700; color: #0b78bd; font-size: 19.900px; }
.link:not(:first-child) { margin: 0 1px 0 3px; }
.code { font-family: "Liberation Mono", monospace; font-style: italic; color: #3b8d74; font-size: 18px; letter-spacing: 1px; margin: 0 3px 0 5px; }

.player { position: absolute; left: 663px; top: 36px; width: 300px; height: 299px; box-sizing: border-box; border: 1px solid #6b6b6c; border-radius: 5px; color: #fff; font-size: 12.500px; font-weight: 600; background: radial-gradient(ellipse 190px 120px at 50% 47%, rgba(255, 255, 255, .045), transparent), linear-gradient(#292929 0, #2c2c2c 9%, #484848 25%, #525252 36%, #525252 60%, #4b4b4b 72%, #4b4b4b); box-shadow: 0 0 0 1px rgba(0, 0, 0, .6), 0 8px 20px rgba(0, 0, 0, .38); }
.tip { position: absolute; left: 134px; top: -13px; width: 30px; height: 13px; }
.p-logo { width: 16px; height: 16px; margin: 3px 0 0 4px; }
.artist { height: 20px; margin-top: 29px; line-height: 20px; padding-left: 115px; display: flex; }
.controls { height: 50px; margin-top: 47px; padding: 0 23px 0 26px; display: flex; justify-content: space-between; align-items: center; }
.controls svg { width: 8px; height: 12px; margin-top: -3px; }
.pause { display: flex; gap: 5px; margin-right: 4px; }
.pause i { width: 25px; height: 49px; background: #d9d9d9; }
.track { height: 20px; margin-top: 56px; line-height: 20px; padding-left: 50px; display: flex; }
.seek { display: flex; align-items: center; height: 20px; margin-top: 18px; padding-left: 10px; font-size: 11.500px; font-weight: 400; color: #d0d0d0; }
.rail { width: 197px; height: 3px; margin: 0 13px 0 10px; border-radius: 2px; background: #6b6b6b; position: relative; }
.done { display: block; width: 43px; height: 3px; border-radius: 2px; background: #1763f5; }
.knob { position: absolute; left: 36px; top: -6px; width: 15px; height: 15px; border-radius: 50%; background: #d2d2d2; box-shadow: 0 1px 1px rgba(0, 0, 0, .3); }

.dock { position: absolute; left: 243px; top: 820px; width: 953px; height: 80px; box-sizing: border-box; border: 1px solid #465160; border-bottom: 0; border-radius: 5px 5px 0 0; padding: 1px 0 0 3px; display: flex; background: linear-gradient(100deg, #171e30, #131c31 50%, #111e35); }
.cell { width: 68px; height: 78px; position: relative; flex: none; }
.cell svg { width: 68px; height: 78px; }
.run::after { content: ""; position: absolute; left: 32px; top: 72px; width: 4px; height: 4px; border-radius: 50%; background: #93a0ae; }
.sep { width: 1px; height: 60px; margin: 8px 14px 0 16px; background: #4d5765; flex: none; }
.sep.last { margin: 8px 15px 0; }
.term { font: 700 14px "DejaVu Sans Mono", monospace; fill: #fff; }
.ij { font: 700 21px "DejaVu Sans Mono", monospace; fill: #fff; }
</style>
